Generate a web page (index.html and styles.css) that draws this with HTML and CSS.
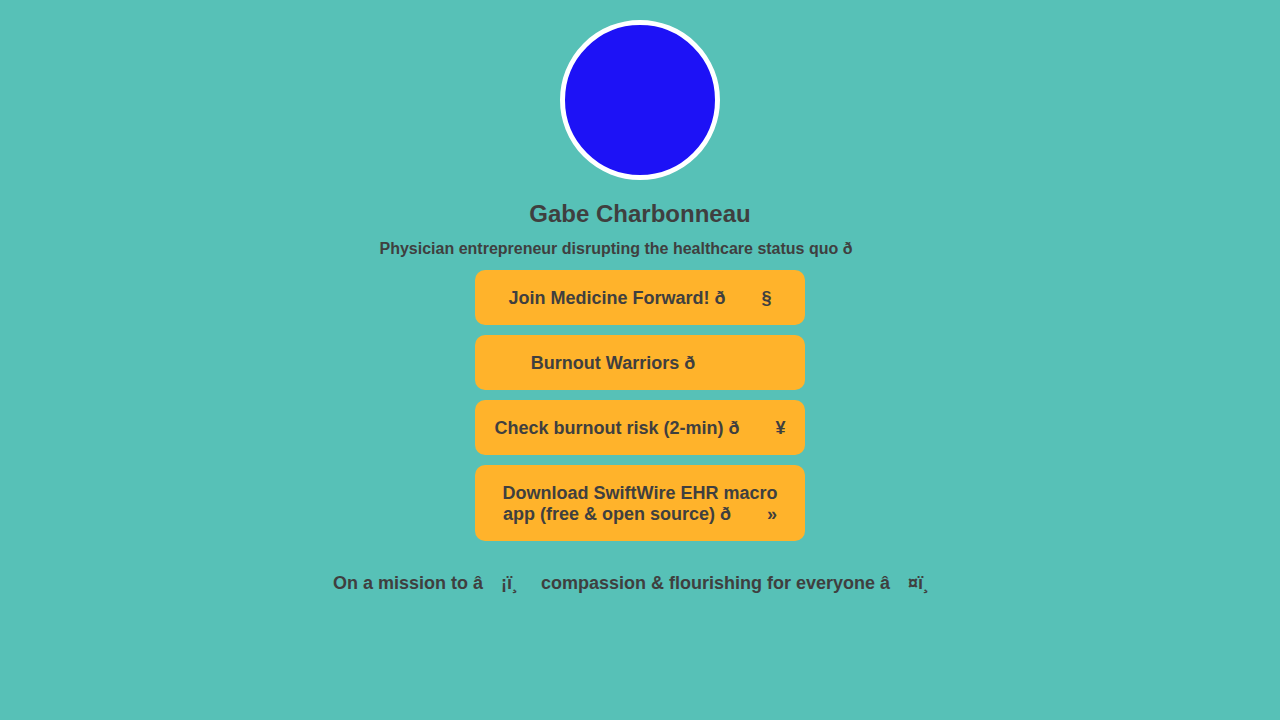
FILE: index.html
```html
<!DOCTYPE html>
<html lang="en">
<head>
<meta charset="utf-8">
<title>Gabe Charbonneau</title>
<link rel="stylesheet" href="styles.css">
</head>
<body>
<main class="profile">
  <div class="avatar"></div>
  <h1 class="name">Gabe Charbonneau</h1>
  <p class="bio">Physician entrepreneur disrupting the healthcare status quo ð<span class="c1"></span><span class="c1"></span><span class="c1"></span></p>
  <nav class="links">
    <a class="link" href="#">Join Medicine Forward! ð<span class="c1"></span><span class="c1"></span>§</a>
    <a class="link" href="#">Burnout Warriors ð<span class="c1"></span><span class="c1"></span><span class="c1"></span></a>
    <a class="link" href="#">Check burnout risk (2-min) ð<span class="c1"></span><span class="c1"></span>¥</a>
    <a class="link" href="#">Download SwiftWire EHR macro app (free &amp; open source) ð<span class="c1"></span><span class="c1"></span>»</a>
  </nav>
  <p class="mission">On a mission to â<span class="c1"></span>¡ï¸<span class="c1"></span> compassion &amp; flourishing for everyone â<span class="c1"></span>¤ï¸<span class="c1"></span></p>
</main>
</body>
</html>
```

FILE: styles.css
```css
html, body {
  margin: 0;
  padding: 0;
}

body {
  background: #57c1b7;
  font-family: "Liberation Sans", Arial, sans-serif;
  color: #3f3f3f;
  min-height: 720px;
}

.profile {
  display: flex;
  flex-direction: column;
  align-items: center;
  padding-top: 20px;
}

.avatar {
  width: 150px;
  height: 150px;
  border: 5px solid #ffffff;
  border-radius: 50%;
  background: #1d12f6;
}

.name {
  margin: 20px 0 0;
  font-size: 24px;
  line-height: 28px;
  font-weight: 700;
}

.bio {
  margin: 12px 0 0;
  font-size: 16px;
  line-height: 18px;
  font-weight: 700;
}

.c1 {
  display: inline-block;
  width: 1em;
}

.links {
  margin-top: 12px;
  display: flex;
  flex-direction: column;
  gap: 10px;
  width: 330px;
}

.link {
  display: block;
  background: #ffb32b;
  border-radius: 10px;
  padding: 18px 15px 16px;
  font-size: 18px;
  line-height: 21px;
  font-weight: 700;
  text-align: center;
  color: #3f3f3f;
  text-decoration: none;
}

.mission {
  margin: 32px 0 0;
  font-size: 18px;
  line-height: 21px;
  font-weight: 700;
}
```
